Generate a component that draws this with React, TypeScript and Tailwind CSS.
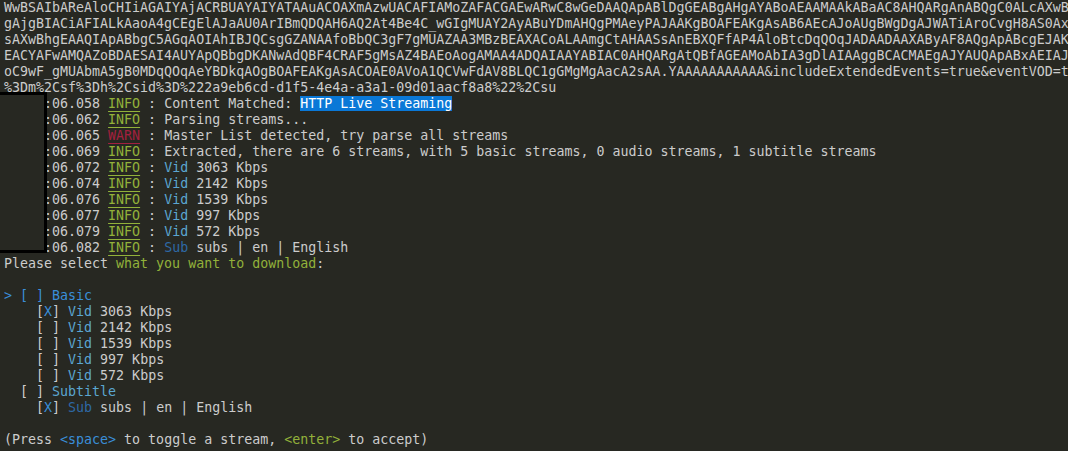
import React from "react";

const G = "text-[#cccccc]";
const GREEN = "text-[#92b13a]";
const RED = "text-[#a3203f]";
const CYAN = "text-[#5ba6d1]";
const DBLUE = "text-[#2e69a6]";
const BLUE = "text-[#3a8ed8]";

const urlLines = [
  "WwBSAIbAReAloCHIiAGAIYAjACRBUAYAIYATAAuACOAXmAzwUACAFIAMoZAFACGAEwARwC8wGeDAAQApABlDgGEABgAHgAYABoAEAAMAAkABaAC8AHQARgAnABQgC0ALcAXwB",
  "gAjgBIACiAFIALkAaoA4gCEgElAJaAU0ArIBmQDQAH6AQ2At4Be4C_wGIgMUAY2AyABuYDmAHQgPMAeyPAJAAKgBOAFEAKgAsAB6AEcAJoAUgBWgDgAJWATiAroCvgH8AS0Ax",
  "sAXwBhgEAAQIApABbgC5AGqAOIAhIBJQCsgGZANAAfoBbQC3gF7gMUAZAA3MBzBEAXACoALAAmgCtAHAASsAnEBXQFfAP4AloBtcDqQOqJADAADAAXAByAF8AQgApABcgEJAK",
  "EACYAFwAMQAZoBDAESAI4AUYApQBbgDKANwAdQBF4CRAF5gMsAZ4BAEoAogAMAA4ADQAIAAYABIAC0AHQARgAtQBfAGEAMoAbIA3gDlAIAAggBCACMAEgAJYAUQApABxAEIAJ",
  "oC9wF_gMUAbmA5gB0MDqQOqAeYBDkqAOgBOAFEAKgAsACOAE0AVoA1QCVwFdAV8BLQC1gGMgMgAacA2sAA.YAAAAAAAAAAA&includeExtendedEvents=true&eventVOD=t",
  "%3Dm%2Csf%3Dh%2Csid%3D%222a9eb6cd-d1f5-4e4a-a3a1-09d01aacf8a8%22%2Csu",
];

function Row({ children }: { children?: React.ReactNode }) {
  return <div className="h-4 leading-4 whitespace-pre">{children ?? " "}</div>;
}

function Lvl({ w }: { w: "INFO" | "WARN" }) {
  return (
    <span className={`${w === "INFO" ? GREEN : RED} underline underline-offset-[3px] decoration-1`}>{w}</span>
  );
}

function LogRow({ t, w, children }: { t: string; w: "INFO" | "WARN"; children: React.ReactNode }) {
  return (
    <Row>
      {`     :${t} `}
      <Lvl w={w} />
      {" : "}
      {children}
    </Row>
  );
}

const vids = ["3063", "2142", "1539", "997", "572"];
const times = ["06.072", "06.074", "06.076", "06.077", "06.079"];

export default function App() {
  return (
    <div
      className={`relative w-[1068px] h-[451px] overflow-hidden bg-[#272822] pl-[4px] ${G} text-[13.3px]`}
      style={{ fontFamily: '"DejaVu Sans Mono", "Liberation Mono", monospace' }}
    >
      {urlLines.map((l, i) => (
        <Row key={i}>{l}</Row>
      ))}
      <LogRow t="06.058" w="INFO">
        {"Content Matched: "}
        <span className="bg-[#0a78d7] text-white">HTTP Live Streaming</span>
      </LogRow>
      <LogRow t="06.062" w="INFO">Parsing streams...</LogRow>
      <LogRow t="06.065" w="WARN">Master List detected, try parse all streams</LogRow>
      <LogRow t="06.069" w="INFO">
        Extracted, there are 6 streams, with 5 basic streams, 0 audio streams, 1 subtitle streams
      </LogRow>
      {vids.map((v, i) => (
        <LogRow key={v} t={times[i]} w="INFO">
          <span className={CYAN}>Vid</span>
          {` ${v} Kbps`}
        </LogRow>
      ))}
      <LogRow t="06.082" w="INFO">
        <span className={DBLUE}>Sub</span>
        {" subs | en | English"}
      </LogRow>
      <Row>
        {"Please select "}
        <span className={GREEN}>what you want to download</span>:
      </Row>
      <Row />
      <Row>
        <span className={BLUE}>{"> [ ] Basic"}</span>
      </Row>
      {vids.map((v, i) => (
        <Row key={"s" + v}>
          {"    ["}
          <span className={BLUE}>{i === 0 ? "X" : " "}</span>
          {"] "}
          <span className={CYAN}>Vid</span>
          {` ${v} Kbps`}
        </Row>
      ))}
      <Row>
        {"  [ ] "}
        <span className={CYAN}>Subtitle</span>
      </Row>
      <Row>
        {"    ["}
        <span className={BLUE}>X</span>
        {"] "}
        <span className={DBLUE}>Sub</span>
        {" subs | en | English"}
      </Row>
      <Row />
      <Row>
        {"(Press "}
        <span className={BLUE}>{"<space>"}</span>
        {" to toggle a stream, "}
        <span className={GREEN}>{"<enter>"}</span>
        {" to accept)"}
      </Row>
      <div className="absolute left-0 top-[92px] w-[47px] h-[161px] border-[3px] border-l-0 border-black bg-[#272822]" />
    </div>
  );
}
